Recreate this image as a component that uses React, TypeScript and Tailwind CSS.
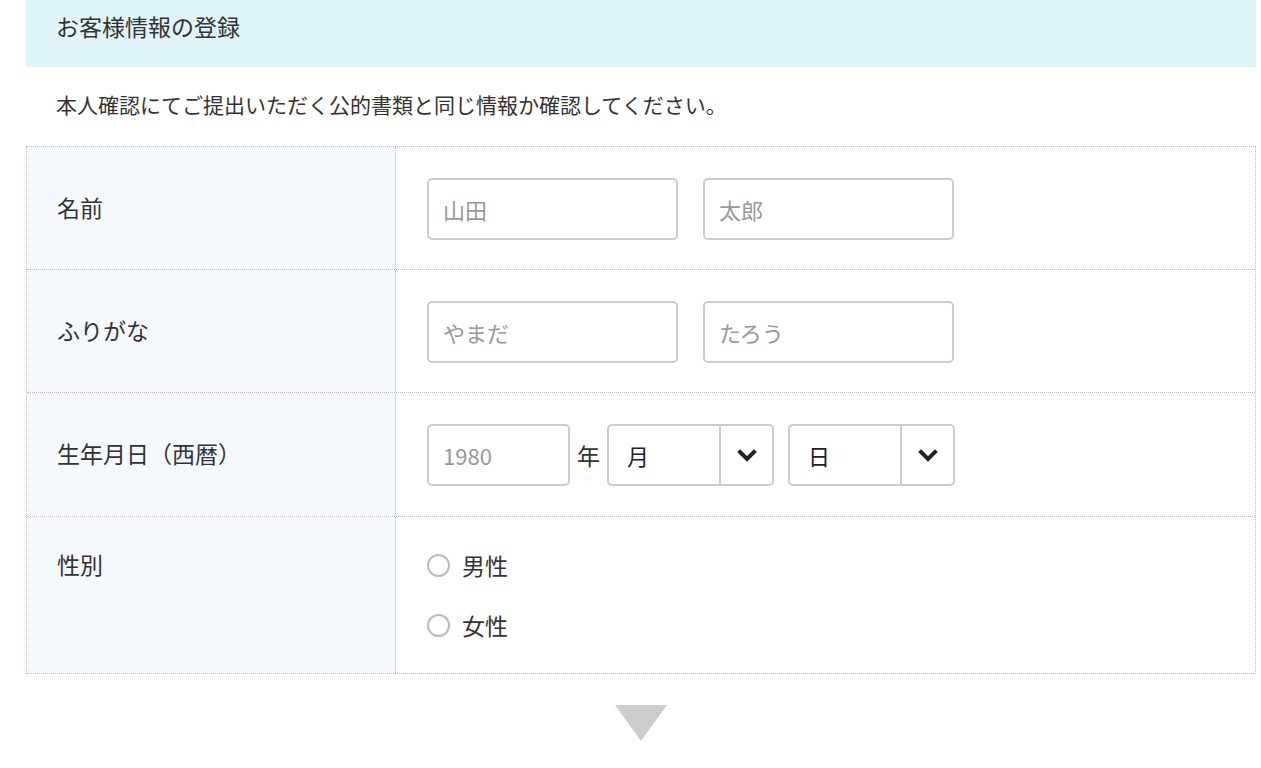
const font = { fontFamily: '"Noto Sans CJK JP", "Liberation Sans", sans-serif' }

function Chevron() {
  return (
    <svg className="w-[24px] h-[24px]" viewBox="0 0 24 24" fill="none" stroke="#222" strokeWidth={4} strokeLinecap="square">
      <path d="M5 9l7 7 7-7" />
    </svg>
  )
}

function Select({ label }: { label: string }) {
  return (
    <div className="w-[167px] h-[62px] border-2 border-[#ccc] rounded-[5px] flex bg-white">
      <div className="flex-1 flex items-center pl-[18px] text-[22px] text-[#222]">{label}</div>
      <div className="w-[53px] border-l-2 border-[#ccc] flex items-center justify-center">
        <Chevron />
      </div>
    </div>
  )
}

function Input({ ph, w }: { ph: string; w: string }) {
  return (
    <div className={`${w} h-[62px] border-2 border-[#ccc] rounded-[5px] flex items-center px-[14px] text-[22px] text-[#999] bg-white`}>{ph}</div>
  )
}

function Row({ label, children, h, pt, last }: { label: string; children: React.ReactNode; h: string; pt: string; last?: boolean }) {
  return (
    <div className={`flex ${h} ${last ? '' : 'border-b border-dotted border-[#bbb]'}`}>
      <div className={`w-[369px] shrink-0 bg-[#f5f9fe] border-r border-dotted border-[#bbb] pl-[30px] ${pt} text-[23px] leading-[30px] text-[#333]`}>{label}</div>
      <div className="flex-1 pl-[31px]">{children}</div>
    </div>
  )
}

function Radio({ label }: { label: string }) {
  return (
    <div className="flex items-center gap-[12px] h-[30px] text-[23px] text-[#333]">
      <span className="w-[23px] h-[23px] rounded-full border-2 border-[#bbb] bg-white" />
      {label}
    </div>
  )
}

export default function App() {
  return (
    <div className="min-h-screen bg-white px-[26px] w-[1282px]" style={font}>
      <div className="bg-[#e0f5fa] h-[67px] pl-[30px] pt-[11px] text-[23px] leading-[30px] text-[#333]">お客様情報の登録</div>
      <p className="pl-[30px] pt-[24px] h-[79px] text-[21px] leading-[26px] text-[#333]">本人確認にてご提出いただく公的書類と同じ情報か確認してください。</p>
      <div className="border border-dotted border-[#bbb]">
        <Row label="名前" h="h-[123px]" pt="pt-[45px]">
          <div className="flex gap-[25px] pt-[31px]">
            <Input ph="山田" w="w-[251px]" />
            <Input ph="太郎" w="w-[251px]" />
          </div>
        </Row>
        <Row label="ふりがな" h="h-[123px]" pt="pt-[45px]">
          <div className="flex gap-[25px] pt-[31px]">
            <Input ph="やまだ" w="w-[251px]" />
            <Input ph="たろう" w="w-[251px]" />
          </div>
        </Row>
        <Row label="生年月日（西暦）" h="h-[124px]" pt="pt-[45px]">
          <div className="flex items-center pt-[31px]">
            <Input ph="1980" w="w-[143px]" />
            <span className="mx-[7px] text-[23px] text-[#333]">年</span>
            <Select label="月" />
            <div className="w-[14px]" />
            <Select label="日" />
          </div>
        </Row>
        <Row label="性別" h="h-[156px]" pt="pt-[32px]" last>
          <div className="flex flex-col gap-[30px] pt-[33px]">
            <Radio label="男性" />
            <Radio label="女性" />
          </div>
        </Row>
      </div>
      <div className="flex justify-center pt-[31px]">
        <div className="w-0 h-0 border-l-[26px] border-r-[26px] border-t-[36px] border-l-transparent border-r-transparent border-t-[#ccc]" />
      </div>
    </div>
  )
}
